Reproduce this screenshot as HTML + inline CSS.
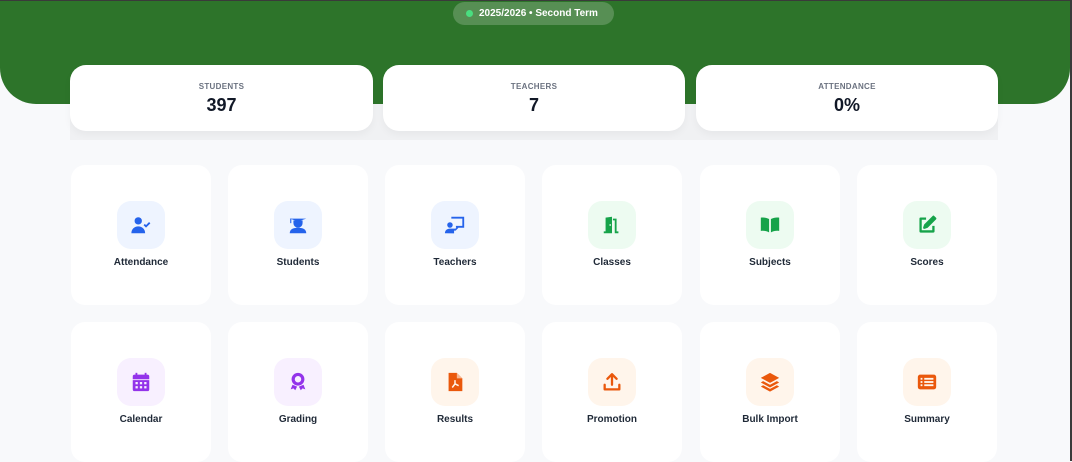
<!DOCTYPE html>
<html><head><meta charset="utf-8"><style>
*{box-sizing:border-box;margin:0;padding:0}
body{width:1072px;height:461px;overflow:hidden;background:#f8f9fb;font-family:"Liberation Sans",sans-serif;position:relative}
.topline{position:absolute;left:0;top:0;width:1072px;height:1px;background:#3a3a3a;z-index:5}
.rightline{position:absolute;right:0;top:0;width:2px;height:461px;background:#3a3a3a;z-index:5}
.hdr{position:absolute;left:0;top:0;width:1070px;height:104px;background:#2d742a;border-radius:0 0 36px 36px}
.pill{position:absolute;left:453px;top:2px;width:161px;height:23px;border-radius:12px;background:rgba(255,255,255,.2);color:#fff;font-size:10px;font-weight:bold;line-height:23px;padding-left:26px}
.pill:before{content:"";position:absolute;left:13px;top:8px;width:7px;height:7px;border-radius:50%;background:#4ade80}
.band{position:absolute;left:70px;top:104px;width:928px;height:36px;background:#f0f1f3}
.stat{position:absolute;top:65px;height:66px;background:#fff;border-radius:16px;text-align:center;box-shadow:0 4px 8px rgba(0,0,0,.04)}
.stat .l{font-size:8px;font-weight:bold;color:#6b7280;letter-spacing:.3px;margin-top:17px}
.stat .v{font-size:18px;font-weight:bold;color:#111827;margin-top:4px}
.tile{position:absolute;width:140px;height:140px;background:#fff;border-radius:14px;text-align:center}
.ic{position:absolute;left:46px;top:36px;width:48px;height:48px;border-radius:14px;display:flex;align-items:center;justify-content:center}
.tile .t{position:absolute;left:0;right:0;top:92px;font-size:10px;font-weight:bold;color:#1f2937}
.b{background:#eef4ff}.g{background:#edfbf1}.p{background:#f8f0ff}.o{background:#fff5eb}
svg{width:22px;height:22px}
</style></head><body>
<div class="topline"></div><div class="rightline"></div>
<div class="hdr"></div>
<div class="band"></div>
<div class="pill">2025/2026 • Second Term</div>
<div class="stat" style="left:70px;width:303px"><div class="l">STUDENTS</div><div class="v">397</div></div>
<div class="stat" style="left:383px;width:302px"><div class="l">TEACHERS</div><div class="v">7</div></div>
<div class="stat" style="left:696px;width:302px"><div class="l">ATTENDANCE</div><div class="v">0%</div></div>

<div class="tile" style="left:71px;top:165px"><div class="ic b"><svg viewBox="0 0 24 24" fill="#2563eb"><circle cx="9" cy="7.5" r="4"/><path d="M1.5 21c0-4.5 3.3-7.5 7.5-7.5s7.5 3 7.5 7.5z"/><path d="M15.5 11.5l2 2 4-4" stroke="#2563eb" stroke-width="2" fill="none"/></svg></div><div class="t">Attendance</div></div>
<div class="tile" style="left:228px;top:165px"><div class="ic b"><svg viewBox="0 0 24 24" fill="#2563eb"><path d="M3 5h18l-9 3z"/><path d="M7 7v3a5 5 0 0 0 10 0V7z"/><rect x="3.5" y="5" width="1.2" height="5"/><path d="M3 21c0-4 3-6 9-6s9 2 9 6z"/></svg></div><div class="t">Students</div></div>
<div class="tile" style="left:385px;top:165px"><div class="ic b"><svg viewBox="0 0 24 24" fill="#2563eb"><path d="M8 3h14v12h-9v-2h7V5H8z"/><circle cx="6.5" cy="12" r="3"/><path d="M1 21c0-3 2.3-5 5.5-5h6l2-2 1.2 1.2-3 3H11v3z"/></svg></div><div class="t">Teachers</div></div>
<div class="tile" style="left:542px;top:165px"><div class="ic g"><svg viewBox="0 0 24 24" fill="#16a34a"><path d="M5 19V4l7-1v18H3v-2z"/><path d="M13 5h4v14h2v2h-4V7h-2z"/><circle cx="10" cy="12" r=".9" fill="#edfbf1"/></svg></div><div class="t">Classes</div></div>
<div class="tile" style="left:700px;top:165px"><div class="ic g"><svg viewBox="0 0 24 24" fill="#16a34a"><path d="M2 4c3-.5 6 0 9 1.5V20c-3-1.5-6-2-9-1.5z"/><path d="M22 4c-3-.5-6 0-9 1.5V20c3-1.5 6-2 9-1.5z"/></svg></div><div class="t">Subjects</div></div>
<div class="tile" style="left:857px;top:165px"><div class="ic g"><svg viewBox="0 0 24 24" fill="none" stroke="#16a34a" stroke-width="2.5" stroke-linejoin="round"><path d="M11 5H5v14h14v-6"/><path d="M19 3l2 2-9 9-3 1 1-3z" fill="#16a34a"/></svg></div><div class="t">Scores</div></div>

<div class="tile" style="left:71px;top:322px"><div class="ic p"><svg viewBox="0 0 24 24" fill="#9333ea"><rect x="6" y="2" width="2" height="4"/><rect x="16" y="2" width="2" height="4"/><path d="M3 6a2 2 0 0 1 2-2h14a2 2 0 0 1 2 2v3H3z"/><path d="M3 10h18v10a2 2 0 0 1-2 2H5a2 2 0 0 1-2-2z"/><g fill="#f8f0ff"><rect x="6" y="12" width="2.5" height="2.5"/><rect x="10.75" y="12" width="2.5" height="2.5"/><rect x="15.5" y="12" width="2.5" height="2.5"/><rect x="6" y="16.5" width="2.5" height="2.5"/><rect x="10.75" y="16.5" width="2.5" height="2.5"/><rect x="15.5" y="16.5" width="2.5" height="2.5"/></g></svg></div><div class="t">Calendar</div></div>
<div class="tile" style="left:228px;top:322px"><div class="ic p"><svg viewBox="0 0 24 24" fill="#9333ea"><circle cx="12" cy="9" r="7"/><circle cx="12" cy="9" r="3.5" fill="#f8f0ff"/><path d="M6 15l-2 5 3-1 2 2 2-4zM18 15l2 5-3-1-2 2-2-4z"/></svg></div><div class="t">Grading</div></div>
<div class="tile" style="left:385px;top:322px"><div class="ic o"><svg viewBox="0 0 24 24" fill="#ea580c"><path d="M5 2h9l6 6v14H5z"/><path d="M14 2v6h6" fill="#fff5eb" opacity=".6"/><path d="M12 10v4l-3 4M12 14l4 2M9 18h0" stroke="#fff5eb" stroke-width="1.6" fill="none"/></svg></div><div class="t">Results</div></div>
<div class="tile" style="left:542px;top:322px"><div class="ic o"><svg viewBox="0 0 24 24" fill="none" stroke="#ea580c" stroke-width="2.5" stroke-linecap="round" stroke-linejoin="round"><path d="M12 15V4M7 8.5l5-5 5 5"/><path d="M4 15v5h16v-5"/></svg></div><div class="t">Promotion</div></div>
<div class="tile" style="left:700px;top:322px"><div class="ic o"><svg viewBox="0 0 24 24" fill="#ea580c"><path d="M12 2l10 5.5-10 5.5L2 7.5z"/><path d="M4.5 11l7.5 4 7.5-4 2.5 1.5-10 5.5-10-5.5z"/><path d="M4.5 15.5l7.5 4 7.5-4 2.5 1.5-10 5.5-10-5.5z"/></svg></div><div class="t">Bulk Import</div></div>
<div class="tile" style="left:857px;top:322px"><div class="ic o"><svg viewBox="0 0 24 24" fill="#ea580c"><rect x="2" y="4" width="20" height="16" rx="2.5"/><g fill="#fff5eb"><rect x="5" y="7.5" width="2" height="2"/><rect x="5" y="11" width="2" height="2"/><rect x="5" y="14.5" width="2" height="2"/><rect x="9" y="7.5" width="10" height="2"/><rect x="9" y="11" width="10" height="2"/><rect x="9" y="14.5" width="10" height="2"/></g></svg></div><div class="t">Summary</div></div>
</body></html>
